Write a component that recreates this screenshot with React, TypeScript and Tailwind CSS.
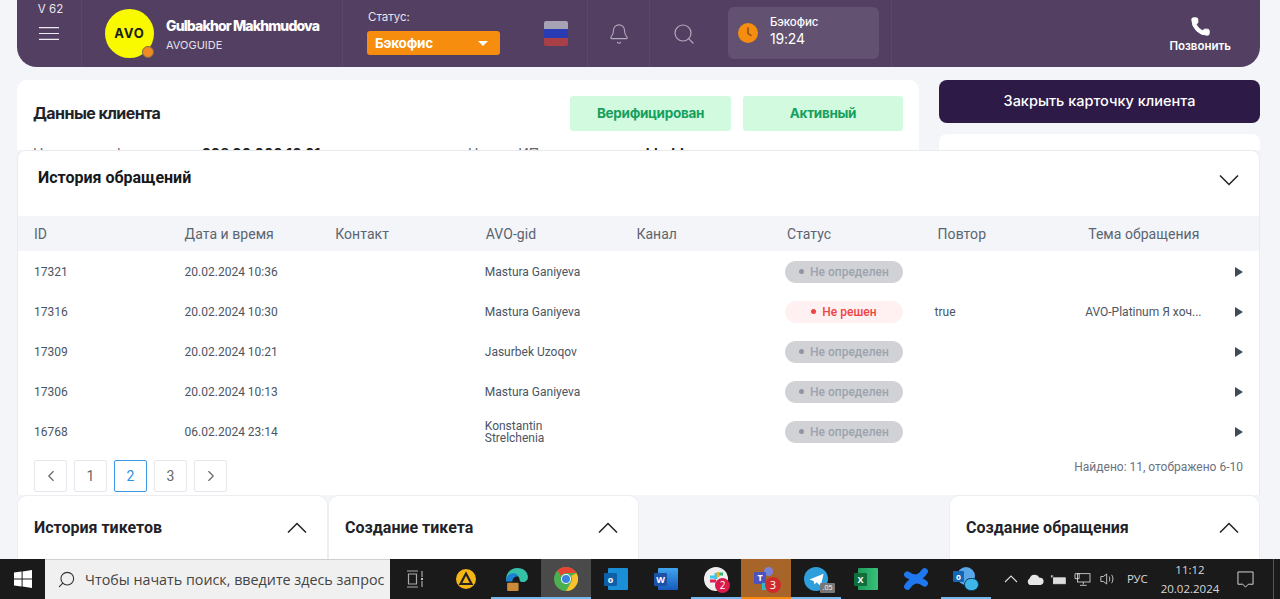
import React from "react";
import { Bell, Search, Phone, ChevronLeft, ChevronRight } from "lucide-react";

const rows = [
  { id: "17321", date: "20.02.2024 10:36", gid: ["Mastura Ganiyeva"], st: "n" },
  { id: "17316", date: "20.02.2024 10:30", gid: ["Mastura Ganiyeva"], st: "r", rep: "true", theme: "AVO-Platinum Я хоч..." },
  { id: "17309", date: "20.02.2024 10:21", gid: ["Jasurbek Uzoqov"], st: "n" },
  { id: "17306", date: "20.02.2024 10:13", gid: ["Mastura Ganiyeva"], st: "n" },
  { id: "16768", date: "06.02.2024 23:14", gid: ["Konstantin", "Strelchenia"], st: "n" },
];
const heads = ["ID", "Дата и время", "Контакт", "AVO-gid", "Канал", "Статус", "Повтор", "Тема обращения"];

function Chev({ up }: { up?: boolean }) {
  return (
    <svg viewBox="0 0 20 11" className="w-[20px] h-[11px]" fill="none" stroke="#222" strokeWidth="1.5">
      <path d={up ? "M1 10.500 10 1.500l9 9" : "M1 .5l9 9 9-9"} />
    </svg>
  );
}

function Badge({ st }: { st: string }) {
  if (st === "r")
    return (
      <div className="w-[118px] h-[22px] rounded-full bg-[#fff1f1] flex items-center justify-center gap-[6px] text-[12px] font-medium text-[#ef4444]">
        <span className="w-[5px] h-[5px] rounded-full bg-[#ef4444]" />Не решен
      </div>
    );
  return (
    <div className="w-[118px] h-[22px] rounded-full bg-[#d1d2d5] flex items-center justify-center gap-[6px] text-[12px] font-medium text-[#9ca3af]">
      <span className="w-[5px] h-[5px] rounded-full bg-[#9195a0]" />Не определен
    </div>
  );
}

function PageBtn({ children, active }: { children: React.ReactNode; active?: boolean }) {
  return (
    <div className={`w-[33px] h-[32px] flex items-center justify-center rounded-[2px] bg-white border text-[14px] ${active ? "border-[#3b97e3] text-[#2f8fe0]" : "border-[#e5e7eb] text-[#666]"}`}>
      {children}
    </div>
  );
}

function SmallCard({ title, className }: { title: string; className: string }) {
  return (
    <div className={`h-[64px] bg-white rounded-t-[10px] border border-b-0 border-[#eceef2] flex items-start justify-between pl-[16px] pr-[20px] pt-[22px] ${className}`}>
      <span className="text-[16px] font-bold text-[#1f2329] leading-[20px]">{title}</span>
      <span className="mt-[4px] flex"><Chev up /></span>
    </div>
  );
}

function TaskSlot({ children, w = "w-[50px]", bg = "", line = "" }: { children: React.ReactNode; w?: string; bg?: string; line?: string }) {
  return (
    <div className={`${w} ${bg} h-full relative flex items-center justify-center shrink-0`}>
      {children}
      {line && <span className={`absolute bottom-0 left-0 right-0 h-[2px] ${line}`} />}
    </div>
  );
}

export default function App() {
  return (
    <div className="w-[1280px] h-[599px] overflow-hidden flex flex-col bg-[#f3f5f9] font-['Roboto',sans-serif]">
      <div className="h-[559px] shrink-0 overflow-hidden pl-[17px] pr-[20px]">
        {/* Header */}
        <header className="h-[67px] bg-[#523f62] rounded-b-[20px] flex items-stretch text-white font-['Inter',sans-serif]">
          <div className="w-[65px] border-r border-[#5a4769] flex flex-col items-center">
            <span className="text-[11.5px] leading-[14px] mt-[2px] ml-[3px] text-[#e8e4ec]">V 62</span>
            <svg viewBox="0 0 20 13" className="w-[20px] h-[13px] mt-[11px]" stroke="#eeeaf2" strokeWidth="1.200"><path d="M0 .6h20M0 6.500h20M0 12.400h20" /></svg>
          </div>
          <div className="w-[261px] border-r border-[#5a4769] flex items-center pl-[23px]">
            <div className="relative w-[49px] h-[49px] rounded-full bg-[#f9f900] flex items-center justify-center">
              <span className="text-[#1c1c1c] font-bold text-[13px] tracking-[0.9px]">AVO</span>
              <span className="absolute right-0 bottom-0 w-[12px] h-[12px] rounded-full bg-[#f08a24] border border-[#7e6a50]" />
            </div>
            <div className="ml-[12px] mt-[3px]">
              <div className="text-[14px] font-extrabold leading-[18px] tracking-[-0.85px]">Gulbakhor Makhmudova</div>
              <div className="text-[11px] leading-[16px] mt-[2px] text-[#e5e0ea]">AVOGUIDE</div>
            </div>
          </div>
          <div className="w-[177px] pl-[25px] flex flex-col">
            <span className="text-[11.5px] leading-[14px] mt-[10px] text-[#e8e4ec]">Статус:</span>
            <div className="w-[133px] h-[24px] mt-[7px] -ml-[1px] rounded-[3px] bg-[#f68d0f] flex items-center justify-between pl-[8px] pr-[12px]">
              <span className="text-[13.5px] font-bold tracking-[-0.2px]">Бэкофис</span>
              <span className="w-0 h-0 border-x-[5px] border-x-transparent border-t-[5px] border-t-white" />
            </div>
          </div>
          <div className="w-[68px] border-r border-[#5a4769] flex items-center pl-[24px]">
            <div className="w-[24px] h-[25px] rounded-[2px] overflow-hidden flex flex-col">
              <span className="h-1/3 bg-[#a8a2b5]" /><span className="h-1/3 bg-[#2a3cb4]" /><span className="h-1/3 bg-[#a93f47]" />
            </div>
          </div>
          <div className="w-[62px] border-r border-[#5a4769] flex items-center justify-center">
            <Bell className="w-[22px] h-[22px] text-[#b3a9bc]" strokeWidth={1.2} />
          </div>
          <div className="w-[68px] flex items-center justify-center">
            <Search className="w-[24px] h-[24px] text-[#b3a9bc]" strokeWidth={1.2} />
          </div>
          <div className="w-[151px] h-[52px] mt-[7px] ml-[10px] rounded-[6px] bg-[#625171] flex items-center pl-[10px]">
            <span className="w-[20px] h-[20px] rounded-full bg-[#f68d0f] flex items-center justify-center">
              <svg viewBox="0 0 20 20" className="w-[20px] h-[20px]"><path d="M10 5v5.500l3 2" fill="none" stroke="#7a4b20" strokeWidth="1.4" strokeLinecap="round" /></svg>
            </span>
            <div className="ml-[12px] -mt-[4px]">
              <div className="text-[11.5px] font-medium leading-[14px] tracking-[-0.1px]">Бэкофис</div>
              <div className="text-[14px] leading-[16px] mt-[2px] tracking-[-0.2px]">19:24</div>
            </div>
          </div>
          <div className="flex-1 ml-[12px] border-l border-[#5a4769] flex justify-end pr-[29px]">
            <div className="flex flex-col items-center mt-[16px]">
              <Phone className="w-[21px] h-[21px] fill-white text-white" strokeWidth={1} />
              <span className="text-[11.5px] font-semibold leading-[14px] mt-[2px]">Позвонить</span>
            </div>
          </div>
        </header>

        {/* Cards behind */}
        <div className="h-[70px] mt-[13px] flex gap-[20px] overflow-hidden">
          <div className="w-[902px] h-[120px] bg-white rounded-[10px] px-[16px] font-['Inter',sans-serif]">
            <div className="flex justify-between items-start h-[62px] pt-[16px]">
              <span className="text-[16px] font-bold text-[#1f2329] tracking-[-0.55px] leading-[35px]">Данные клиента</span>
              <div className="flex gap-[12px]">
                <div className="w-[161px] h-[35px] rounded-[3px] bg-[#d1fadf] text-[#16a05d] text-[13.5px] font-bold flex items-center justify-center tracking-[-0.3px]">Верифицирован</div>
                <div className="w-[160px] h-[35px] rounded-[3px] bg-[#d1fadf] text-[#16a05d] text-[13.5px] font-bold flex items-center justify-center tracking-[-0.3px]">Активный</div>
              </div>
            </div>
            <div className="flex text-[14px] leading-[20px] mt-[2px] text-[#666]">
              <span className="w-[169px]">Номер телефона</span>
              <span className="w-[266px] font-bold text-[#222]">998 90 000 10 01</span>
              <span className="w-[165px]">Номер ИП</span>
              <span className="font-bold text-[#222]">a.kholdar</span>
            </div>
          </div>
          <div className="w-[321px] flex flex-col gap-[11px]">
            <div className="h-[43px] pb-[1px] shrink-0 rounded-[8px] bg-[#2e1a47] text-white text-[14.5px] font-medium flex items-center justify-center font-['Inter',sans-serif]">Закрыть карточку клиента</div>
            <div className="h-[60px] shrink-0 bg-white rounded-[8px]" />
          </div>
        </div>

        {/* History */}
        <section className="w-[1243px] h-[345px] bg-white rounded-t-[8px] border border-b-0 border-[#e9ebef]">
          <div className="h-[65px] flex justify-between pl-[20px] pr-[20px] pt-[17px]">
            <span className="text-[16px] font-bold text-[#15181c] leading-[20px]">История обращений</span>
            <span className="mt-[7px] flex"><Chev /></span>
          </div>
          <div className="h-[35px] pt-[1px] bg-[#f3f5f9] grid grid-cols-[150.6px_150.6px_150.6px_150.6px_150.6px_150.6px_150.6px_1fr] items-center pl-[16px] text-[14px] text-[#5c6470] tracking-[0.05px]">
            {heads.map((h) => <span key={h}>{h}</span>)}
          </div>
          {rows.map((r) => (
            <div key={r.id} className="h-[40px] pt-[1px] grid grid-cols-[150.6px_150.6px_150.6px_150.6px_150.6px_150.6px_150.6px_1fr] items-center pl-[16px] text-[12px] text-[#4b5563]">
              <span>{r.id}</span>
              <span>{r.date}</span>
              <span />
              <div className="leading-[12px] -ml-[1px]">{r.gid.map((g) => <div key={g}>{g}</div>)}</div>
              <span />
              <div className="-ml-[2px]"><Badge st={r.st} /></div>
              <span className="-ml-[3px]">{r.rep}</span>
              <div className="flex items-center justify-between pr-[16px] -ml-[3px]">
                <span>{r.theme}</span>
                <span className="w-0 h-0 border-y-[5px] border-y-transparent border-l-[8px] border-l-[#414a5b] ml-auto mt-[1px]" />
              </div>
            </div>
          ))}
          <div className="flex justify-between px-[16px] pt-[9px]">
            <div className="flex gap-[7px]">
              <PageBtn><ChevronLeft className="w-[18px] h-[18px]" strokeWidth={1.5} /></PageBtn>
              <PageBtn>1</PageBtn>
              <PageBtn active>2</PageBtn>
              <PageBtn>3</PageBtn>
              <PageBtn><ChevronRight className="w-[18px] h-[18px]" strokeWidth={1.5} /></PageBtn>
            </div>
            <span className="text-[12px] text-[#6b7280] leading-[14px]">Найдено: 11, отображено 6-10</span>
          </div>
        </section>

        {/* Bottom */}
        <div className="flex">
          <SmallCard title="История тикетов" className="w-[311px]" />
          <SmallCard title="Создание тикета" className="w-[311px]" />
          <SmallCard title="Создание обращения" className="w-[311px] ml-[310px]" />
        </div>
      </div>

      {/* Taskbar */}
      <div className="h-[40px] shrink-0 bg-[#1a1a1a] flex items-center text-white font-['Open_Sans',sans-serif]">
        <div className="w-[45px] h-full flex items-center justify-center">
          <svg viewBox="0 0 18 18" className="w-[18px] h-[18px]" fill="#fff"><path d="M0 2.600 7.600 1.500v7H0zM8.600 1.400 18 0v8.500H8.600zM0 9.500h7.600v7L0 15.400zM8.600 9.500H18V18l-9.400-1.400z" /></svg>
        </div>
        <div className="w-[345px] h-full bg-[#f0f0f0] border-t border-[#cfcfcf] flex items-center pl-[12px]">
          <Search className="w-[19px] h-[19px] text-[#333] -scale-x-100" strokeWidth={1.4} />
          <span className="ml-[9px] text-[14.3px] text-[#444] whitespace-nowrap">Чтобы начать поиск, введите здесь запрос</span>
        </div>
        <TaskSlot w="w-[51px]">
          <svg viewBox="0 0 20 20" className="w-[20px] h-[20px]" fill="none" stroke="#aaa" strokeWidth="1.2"><path d="M1 2h11M1 18h11M2.500 5h8v10h-8zM16 2v6M16 12v6" /><circle cx="16" cy="10" r="1" fill="#fff" stroke="none" /></svg>
        </TaskSlot>
        <TaskSlot>
          <svg viewBox="0 0 20 20" className="w-[20px] h-[20px]"><circle cx="10" cy="10" r="10" fill="#f5b516" /><path d="M10 4.500 15.500 15h-11z" fill="none" stroke="#222" strokeWidth="2.200" /></svg>
        </TaskSlot>
        <TaskSlot line="bg-[#76b9ed]">
          <svg viewBox="0 0 24 24" className="w-[25px] h-[25px]"><path d="M2 12C2 5 7 1 13 1s10 4 10 9c0 3-3 4.500-5 4.500-2 0-3-1-3-2 0-2-1-4-4-4s-5 2-6 4z" fill="#35c1a8" /><path d="M2 12c1-4 4-6 7-6 3 0 5 2 4 3-3 0-5 2-5 5H2z" fill="#1b7fd6" /><rect x="3" y="15" width="11" height="8" rx="1" fill="#c98a3a" /></svg>
        </TaskSlot>
        <TaskSlot bg="bg-[#4a4a4a]" line="bg-[#76b9ed]">
          <svg viewBox="0 0 48 48" className="w-[24px] h-[24px]"><circle cx="24" cy="24" r="24" fill="#4caf50" /><path d="M24 0a24 24 0 0 1 20.800 12H24a12 12 0 0 0-10.400 6L7 6.500A24 24 0 0 1 24 0z" fill="#ea4335" /><path d="M44.800 12A24 24 0 0 1 24 48l10.400-18a12 12 0 0 0 0-12z" fill="#fbc02d" /><circle cx="24" cy="24" r="10" fill="#fff" /><circle cx="24" cy="24" r="8" fill="#3b82e4" /></svg>
        </TaskSlot>
        <TaskSlot>
          <div className="relative w-[24px] h-[22px]">
            <div className="absolute left-[4px] top-0 w-[20px] h-[22px] bg-[#1a8fd8] rounded-[1px]" />
            <div className="absolute left-0 top-[5px] w-[13px] h-[13px] bg-[#0f5ea8] rounded-[1px] flex items-center justify-center text-[9px] font-bold">o</div>
          </div>
        </TaskSlot>
        <TaskSlot>
          <div className="relative w-[24px] h-[22px]">
            <div className="absolute left-[4px] top-0 w-[20px] h-[22px] rounded-[1px] bg-gradient-to-b from-[#41a5ee] to-[#185abd]" />
            <div className="absolute left-0 top-[5px] w-[13px] h-[13px] bg-[#1a52a8] rounded-[1px] flex items-center justify-center text-[9px] font-bold">W</div>
          </div>
        </TaskSlot>
        <TaskSlot line="bg-[#76b9ed]">
          <div className="relative w-[24px] h-[24px] rounded-full bg-[#eeeeee]">
            <svg viewBox="0 0 24 24" className="w-[24px] h-[24px]"><path d="M6 10h6M12 6v6" stroke="#36c5f0" strokeWidth="3" /><path d="M13 7h6" stroke="#2eb67d" strokeWidth="3" /><path d="M6 14h6" stroke="#e01e5a" strokeWidth="3" /><path d="M14 5v5" stroke="#ecb22e" strokeWidth="3" /></svg>
            <span className="absolute -right-[2px] -bottom-[2px] w-[15px] h-[15px] rounded-full bg-[#d81b4a] text-[10px] flex items-center justify-center">2</span>
          </div>
        </TaskSlot>
        <TaskSlot bg="bg-[#a7652a]" line="bg-[#f58a0e]">
          <div className="relative w-[24px] h-[24px]">
            <span className="absolute left-[10px] top-0 w-[9px] h-[9px] rounded-full bg-[#7b83d8]" />
            <span className="absolute left-0 top-[5px] w-[12px] h-[12px] rounded-[1px] bg-[#4b53bc] text-[9px] font-bold flex items-center justify-center">T</span>
            <span className="absolute left-[8px] top-[16px] w-[6px] h-[7px] bg-[#35b6c4]" />
            <span className="absolute -right-[3px] bottom-[-2px] w-[16px] h-[16px] rounded-full bg-[#cf2b2b] text-[11px] flex items-center justify-center">3</span>
          </div>
        </TaskSlot>
        <TaskSlot line="bg-[#76b9ed]">
          <div className="relative w-[24px] h-[24px] rounded-full bg-[#2f9fdc] flex items-center justify-center">
            <svg viewBox="0 0 24 24" className="w-[17px] h-[17px]"><path d="M2 12 22 4l-4 17-6-5-3 3-1-5z" fill="#fff" /></svg>
            <span className="absolute -right-[7px] -bottom-[2px] w-[15px] h-[10px] rounded-[1px] bg-[#777] text-[7px] leading-[10px] text-center">.05</span>
          </div>
        </TaskSlot>
        <TaskSlot>
          <div className="relative w-[24px] h-[22px]">
            <div className="absolute left-[4px] top-0 w-[20px] h-[22px] rounded-[1px] bg-gradient-to-r from-[#1f9d5b] to-[#37c27a]" />
            <div className="absolute left-0 top-[5px] w-[13px] h-[13px] bg-[#0f6e3b] rounded-[1px] flex items-center justify-center text-[9px] font-bold">X</div>
          </div>
        </TaskSlot>
        <TaskSlot>
          <svg viewBox="0 0 24 24" className="w-[26px] h-[26px]" fill="none" stroke="#1f78f0" strokeWidth="6" strokeLinecap="round"><path d="M4 19c4-6 9-8 16-3" /><path d="M4 8c7 5 12 3 16-3" /></svg>
        </TaskSlot>
        <TaskSlot line="bg-[#76b9ed]">
          <div className="relative w-[26px] h-[24px]">
            <div className="absolute left-[4px] top-0 w-[18px] h-[18px] rounded-full bg-[#5aa7e8]" />
            <div className="absolute left-0 top-[4px] w-[11px] h-[11px] bg-[#1665b5] rounded-[1px] text-[8px] font-bold flex items-center justify-center">o</div>
            <div className="absolute right-0 bottom-0 w-[15px] h-[13px] rounded-full bg-[#3fb6e8] border border-[#0b3a5c]" />
          </div>
        </TaskSlot>
        <div className="flex-1 h-full flex items-center text-[#d8d8d8]">
          <svg viewBox="0 0 14 8" className="w-[14px] h-[8px] ml-[13px] shrink-0" fill="none" stroke="#ddd" strokeWidth="1.1"><path d="M1 7l6-6 6 6" /></svg>
          <svg viewBox="0 0 20 12" className="w-[18px] h-[11px] ml-[8px] shrink-0"><path d="M4 12a4 4 0 0 1 0-7 6 6 0 0 1 11-1 4 4 0 0 1 1 8z" fill="#e6e6e6" /></svg>
          <svg viewBox="0 0 20 12" className="w-[17px] h-[11px] ml-[6px] shrink-0" fill="none" stroke="#ddd"><path d="M1 2h3M2 1v3" /><rect x="4" y="4" width="14" height="7" fill="#ddd" /></svg>
          <svg viewBox="0 0 20 18" className="w-[17px] h-[15px] ml-[7px] shrink-0" fill="none" stroke="#ddd"><rect x="4" y="2" width="15" height="10" /><path d="M11 12v3M7 16h8M1 2h5v6H1z" /></svg>
          <svg viewBox="0 0 18 16" className="w-[15px] h-[14px] ml-[9px] shrink-0" fill="none" stroke="#ddd"><path d="M1 5h3l4-3v12l-4-3H1zM11 5c1 2 1 4 0 6M14 3c2 3 2 7 0 10" /></svg>
          <span className="text-[11.5px] ml-[12px] w-[21px] tracking-[-0.3px] shrink-0">РУС</span>
          <div className="ml-[4px] w-[76px] shrink-0 text-center text-[11.5px] leading-[19px]">
            <div>11:12</div>
            <div>20.02.2024</div>
          </div>
          <svg viewBox="0 0 18 18" className="w-[17px] h-[17px] ml-[9px] shrink-0" fill="none" stroke="#ddd"><path d="M1 1h16v13h-5l-3 3-3-3H1z" /></svg>
          <span className="ml-[19px] w-px h-full bg-[#555] shrink-0" />
        </div>
      </div>
    </div>
  );
}
